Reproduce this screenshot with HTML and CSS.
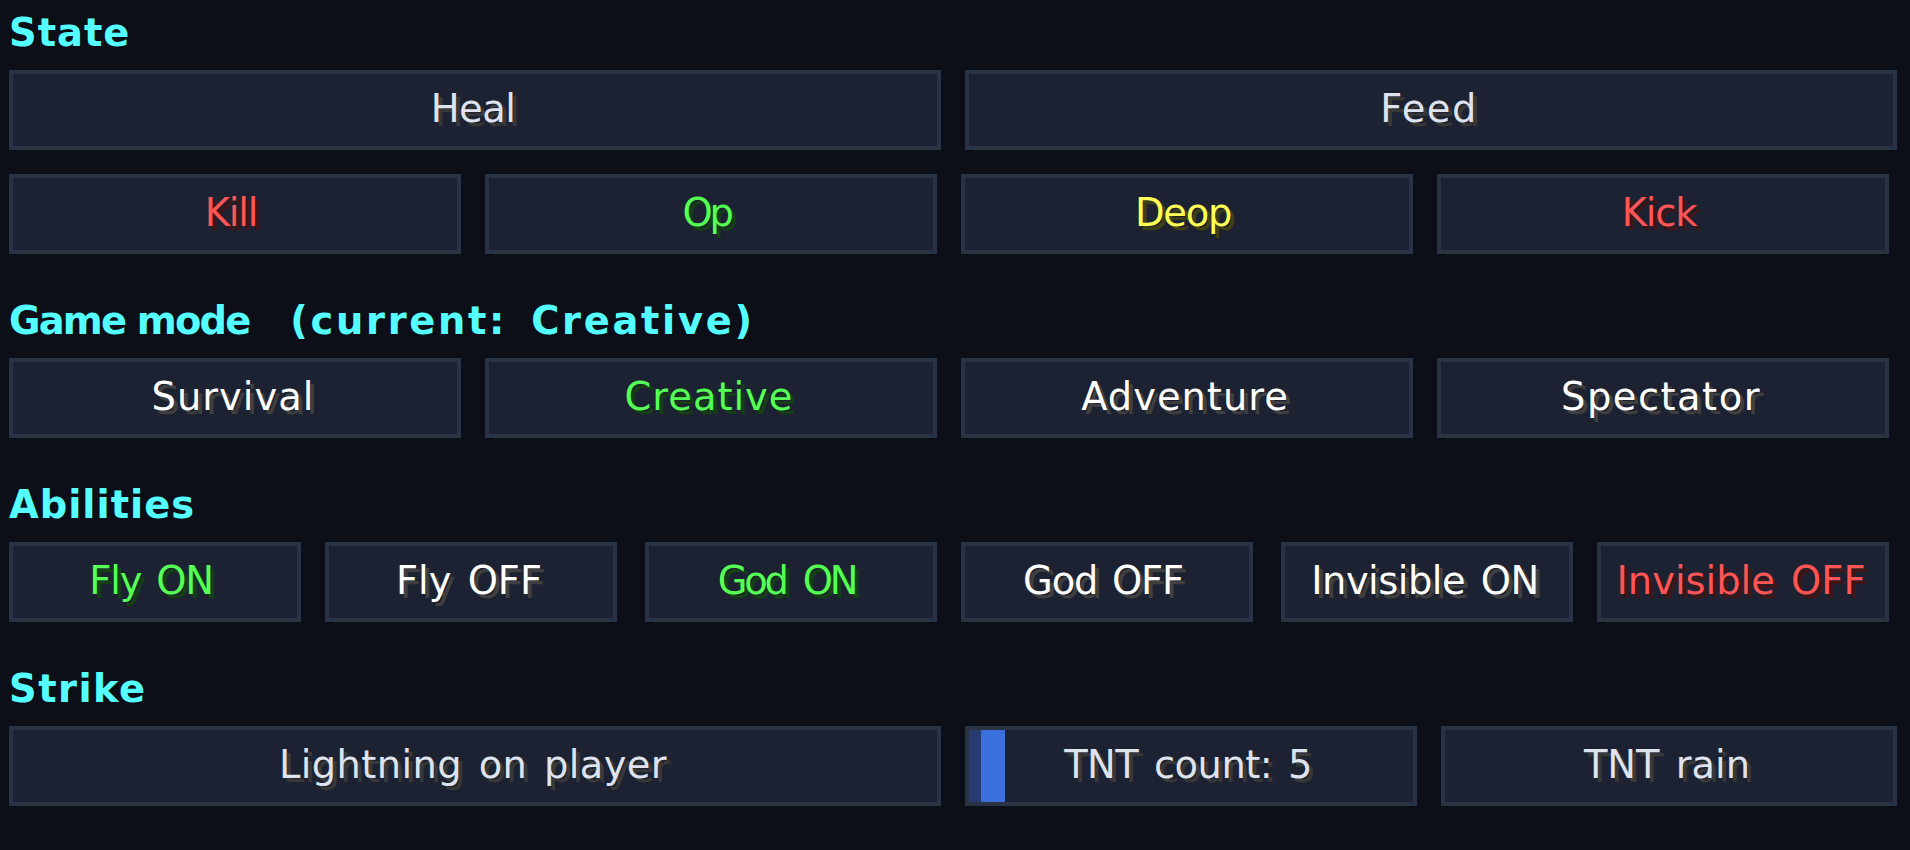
FILE: index.html
```
<!DOCTYPE html>
<html lang="en">
<head>
    <meta charset="UTF-8">
    <meta name="viewport" content="width=device-width, initial-scale=1.0">
    <title>Player Actions</title>
    <link rel="stylesheet" href="styles.css">
</head>
<body>
<main class="panel">
    <section>
      <h2 class="loose">State</h2>
      <div class="row halves">
        <button class="tight">Heal</button>
        <button class="wide">Feed</button>
      </div>
      <div class="row quarters">
        <button class="red tighter">Kill</button>
        <button class="green narrow">Op</button>
        <button class="yellow tighter">Deop</button>
        <button class="red tighter">Kick</button>
      </div>
    </section>

    <section>
      <h2><span class="mode">Game mode</span>  <span class="current">(current: Creative)</span></h2>
      <div class="row quarters">
        <button class="white loose">Survival</button>
        <button class="green loose">Creative</button>
        <button class="white loose">Adventure</button>
        <button class="white wide">Spectator</button>
      </div>
    </section>

    <section>
      <h2 class="loose">Abilities</h2>
      <div class="row pairs">
        <div class="pair">
          <button class="green tighter">Fly ON</button>
          <button class="white">Fly OFF</button>
        </div>
        <div class="pair">
          <button class="green narrow">God ON</button>
          <button class="white tighter">God OFF</button>
        </div>
        <div class="pair">
          <button class="white tight">Invisible ON</button>
          <button class="red">Invisible OFF</button>
        </div>
      </div>
    </section>

    <section>
      <h2 class="wide">Strike</h2>
      <div class="row strike">
        <button class="slight">Lightning on player</button>
        <div class="slider tight">
          <span class="fill"></span>
          <span class="handle"></span>
          <span class="label">TNT count: 5</span>
        </div>
        <button>TNT rain</button>
      </div>
    </section>
</main>
</body>
</html>
```

FILE: styles.css
```
* {
  box-sizing: border-box;
}

body {
  margin: 0;
  background-color: #0c0f17;
  font-family: "DejaVu Sans", sans-serif;
  font-size: 38.4px;
  color: #dfe3ee;
}

.panel {
  padding: 10px 13px 0 9px;
}

h2 {
  height: 44px;
  margin: 0 0 16px;
  font-size: 38.4px;
  font-weight: bold;
  line-height: 46px;
  color: #55ffff;
  white-space: pre;
}

section {
  margin-bottom: 44px;
}

.row {
  display: grid;
  gap: 24px;
}

.row + .row {
  margin-top: 24px;
}

.halves {
  grid-template-columns: 932px 932px;
}

.quarters {
  grid-template-columns: repeat(4, 452px);
}

.pairs {
  grid-template-columns: repeat(3, 608px);
  gap: 28px;
}

.pair {
  display: grid;
  grid-template-columns: 292px 292px;
  gap: 24px;
}

.strike {
  grid-template-columns: 932px 452px 456px;
}

button, .slider {
  height: 80px;
  padding: 0 4px 2px 0;
  border: 4px solid #2a3344;
  background-color: #1c2231;
  font-family: inherit;
  font-size: inherit;
  line-height: 70px;
  color: inherit;
  text-align: center;
  text-shadow: 4px 4px 0 #383838;
  white-space: nowrap;
  word-spacing: 4px;
}

button {
  cursor: pointer;
}

.white {
  color: #ffffff;
  text-shadow: 4px 4px 0 #3f3f3f;
}

.red {
  color: #ff5555;
  text-shadow: 4px 4px 0 #3f1515;
}

.green {
  color: #55ff55;
  text-shadow: 4px 4px 0 #153f15;
}

.yellow {
  color: #ffff55;
  text-shadow: 4px 4px 0 #3f3f15;
}

/* letter spacing */
.narrow {
  padding-right: 9px;
  letter-spacing: -3.2px;
  word-spacing: 8px;
}

.tighter {
  padding-right: 8px;
  letter-spacing: -1.2px;
}

.tight {
  letter-spacing: -0.5px;
}

.slight {
  letter-spacing: 0.4px;
}

.loose {
  letter-spacing: 1px;
}

.wide {
  letter-spacing: 1.5px;
}

.mode {
  letter-spacing: -1.8px;
}

.current {
  margin-left: 14px;
  letter-spacing: 2.7px;
  word-spacing: 8px;
}

/* TNT count slider */
.slider {
  display: flex;
  padding: 0;
}

.fill {
  width: 12px;
  background-color: #263c70;
}

.handle {
  width: 24px;
  background-color: #3b70dc;
}

.label {
  flex: 1;
  margin-left: -36px;
  padding-right: 6px;
}
```
